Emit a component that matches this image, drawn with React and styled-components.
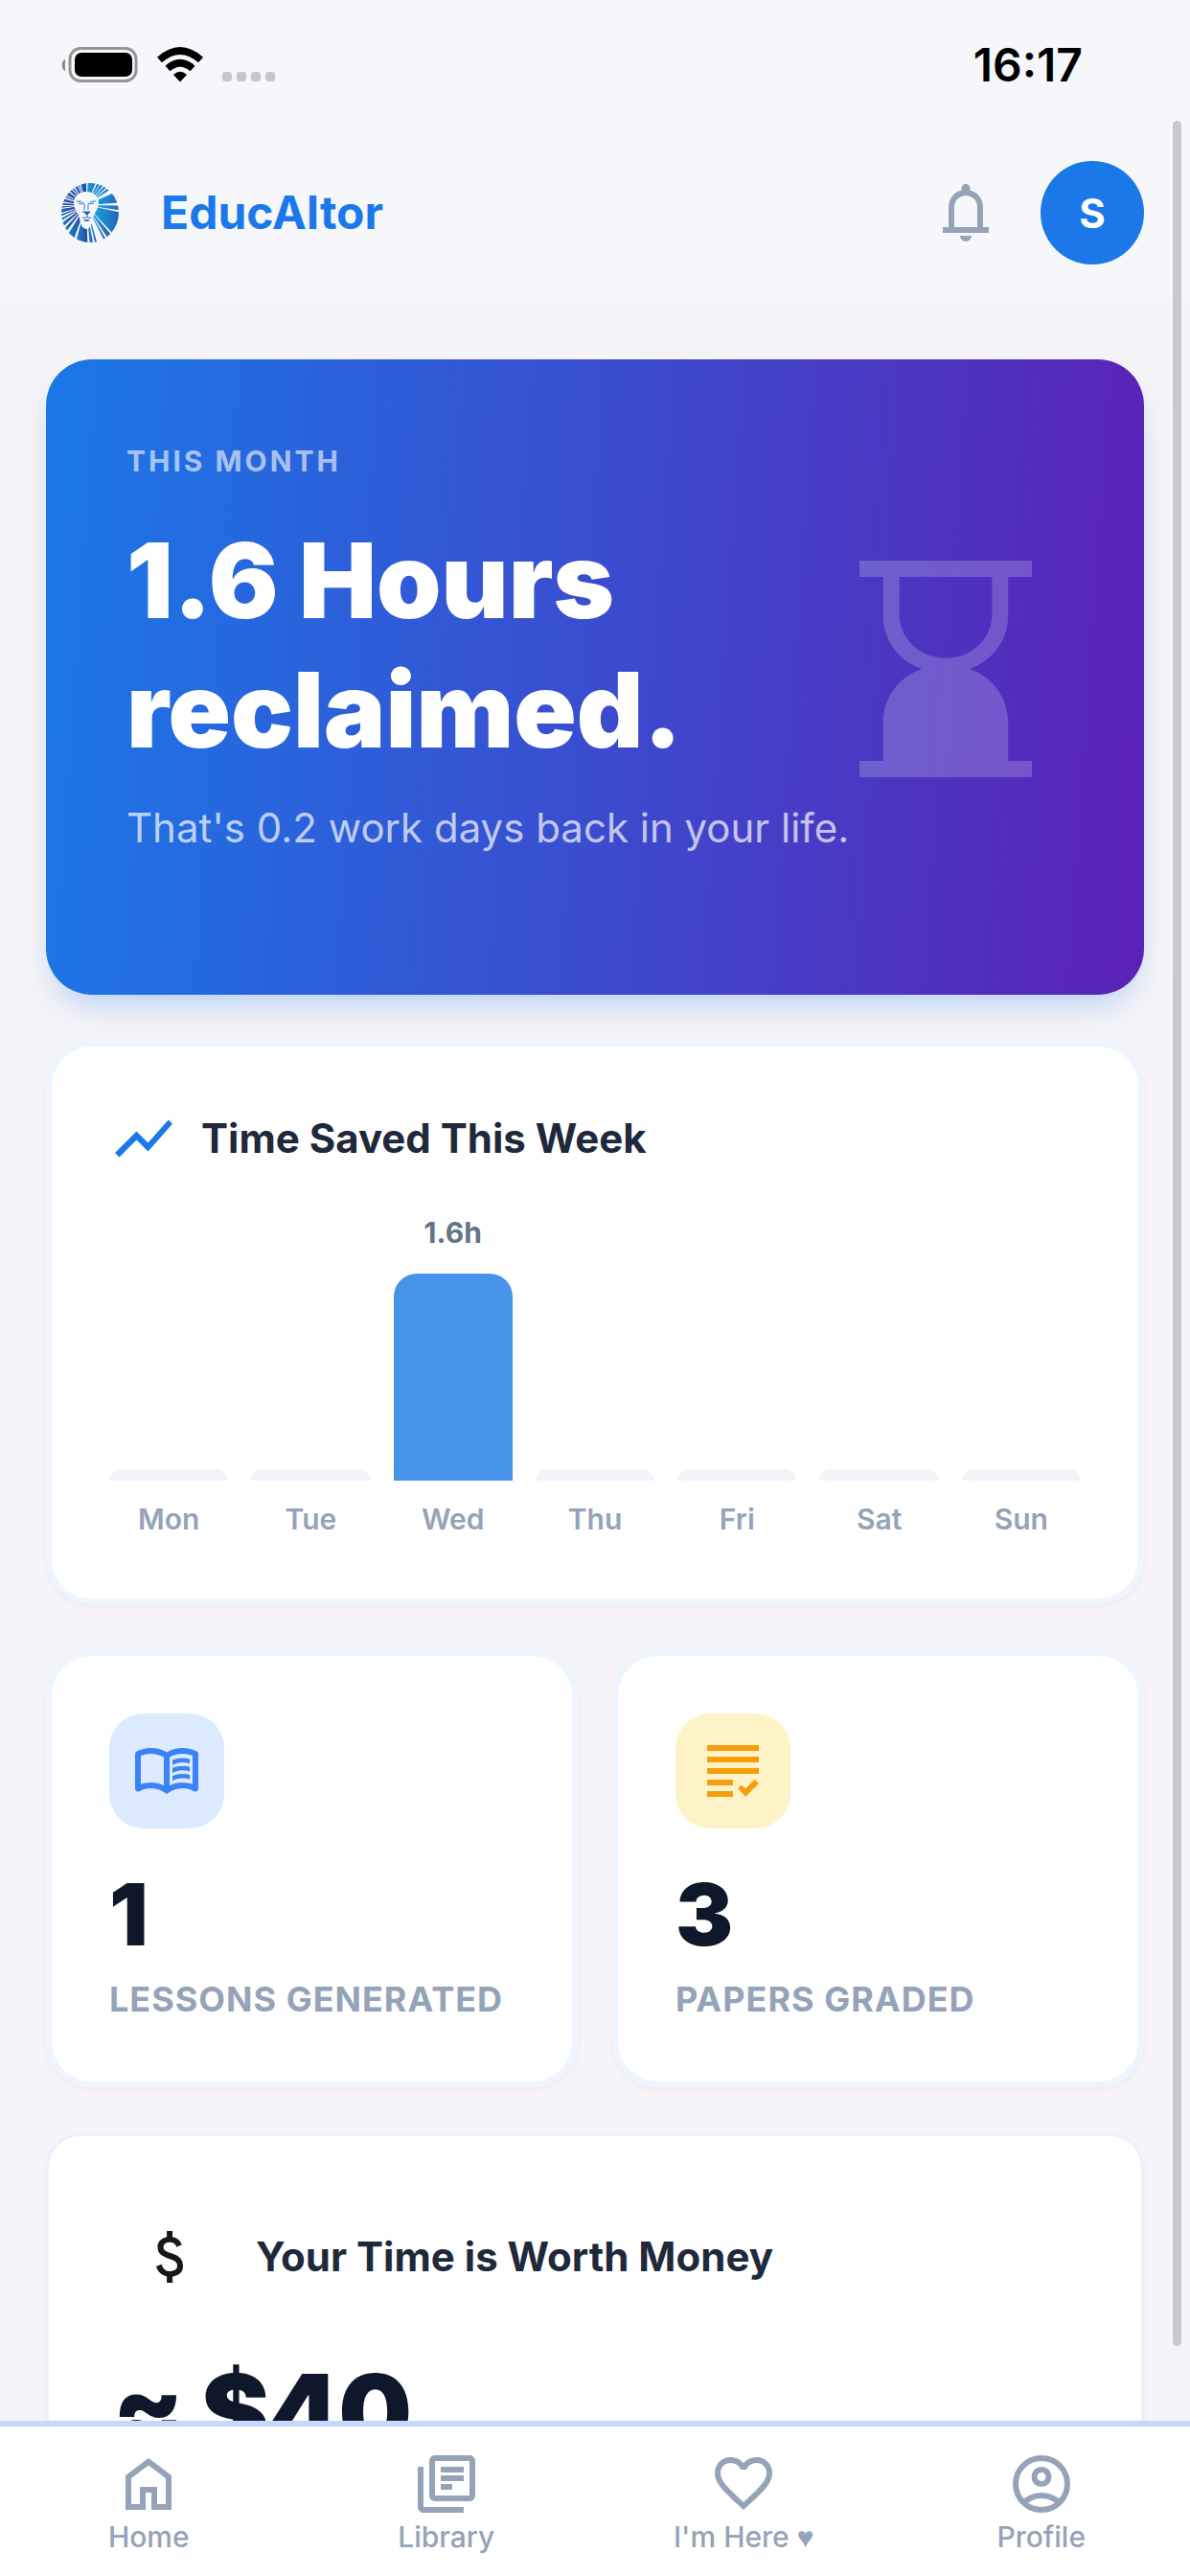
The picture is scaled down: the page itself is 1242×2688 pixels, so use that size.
import React, { Component } from 'react'
import styled, { createGlobalStyle } from 'styled-components'
import { MdShowChart, MdOutlineLibraryBooks } from 'react-icons/md'

const GlobalStyle = createGlobalStyle`
	* {
		box-sizing: border-box;
	}
	body {
		margin: 0;
		background: #f6f4f8;
		font-family: Inter, "Liberation Sans", "DejaVu Sans", sans-serif;
		-webkit-font-smoothing: antialiased;
	}
	h1, h2, p {
		margin: 0;
	}
	button {
		font-family: inherit;
		border: none;
		padding: 0;
		background: none;
	}
`

const Screen = styled.div`
	display: flex;
	flex-direction: column;
	height: 100vh;
	position: relative;
	overflow: hidden;
`

const TopArea = styled.header`
	flex: none;
	background: #f5f7fa;
`

const StatusBar = styled.div`
	display: flex;
	align-items: center;
	justify-content: space-between;
	height: 126px;
	padding: 10px 112px 0 64px;
`

const StatusIcons = styled.div`
	display: flex;
	align-items: center;
	gap: 20px;
`

const Clock = styled.time`
	font-size: 48px;
	font-weight: 600;
	line-height: 60px;
	color: #000;
`

const TitleBar = styled.div`
	display: flex;
	align-items: center;
	justify-content: space-between;
	padding: 42px 48px 36px;
`

const Brand = styled.a`
	display: flex;
	align-items: center;
	gap: 30px;
	font-size: 48px;
	font-weight: 700;
	line-height: 60px;
	color: #1a78e8;
	text-decoration: none;
`

const Actions = styled.div`
	display: flex;
	align-items: center;
	gap: 42px;
`

const BellButton = styled.button`
	display: flex;
	color: #94a3b8;
`

const Avatar = styled.button`
	width: 108px;
	height: 108px;
	border-radius: 50%;
	background: #1a78e8;
	color: #fff;
	font-size: 42px;
	font-weight: 700;
`

const Content = styled.main`
	flex: 1;
	min-height: 0;
	overflow: hidden;
	display: flex;
	flex-direction: column;
	gap: 48px;
	padding: 63px 48px 0;
	> * {
		flex: none;
	}
`

const Hero = styled.section`
	display: flex;
	align-items: center;
	padding: 84px 117px 102px 84px;
	border-radius: 48px;
	background: linear-gradient(94deg, #1a78e8, #5b21b6);
	box-shadow: 0 18px 36px -12px rgba(26, 120, 232, 0.35);
	color: #fff;
	svg {
		flex: none;
	}
`

const HeroText = styled.div`
	flex: 1;
	min-width: 0;
	padding-bottom: 41px;
`

const Period = styled.p`
	font-size: 30px;
	font-weight: 700;
	line-height: 45px;
	letter-spacing: 3px;
	text-transform: uppercase;
	color: rgba(255, 255, 255, 0.6);
`

const Headline = styled.h1`
	margin: 34px 0 24px;
	font-size: 108px;
	font-weight: 900;
	line-height: 135px;
`

const HeroNote = styled.p`
	font-size: 42px;
	line-height: 63px;
	white-space: nowrap;
	color: rgba(255, 255, 255, 0.7);
`

const Card = styled.section`
	border: 6px solid #eef5ff;
	border-radius: 48px;
	padding: 60px;
	background: #fff;
	box-shadow: 0 3px 6px rgba(0, 0, 0, 0.04);
`

const CardHead = styled.div`
	display: flex;
	align-items: center;
	gap: 24px;
	color: #1a78e8;
`

const CardTitle = styled.h2`
	font-size: 42px;
	font-weight: 700;
	line-height: 54px;
	color: #1e293b;
`

const Chart = styled.div`
	display: grid;
	grid-template-columns: repeat(7, 1fr);
	gap: 24px;
	margin-top: 36px;
`

const Day = styled.div`
	display: flex;
	flex-direction: column;
	height: 348px;
	justify-content: flex-end;
	align-items: center;
	font-size: 30px;
	line-height: 45px;
`

const DayValue = styled.span`
	margin-bottom: 20px;
	font-weight: 700;
	color: #64748b;
`

const Bar = styled.div`
	width: 100%;
	border-radius: ${props => props.$filled ? '24px 24px 0 0' : '12px 12px 0 0'};
	background: ${props => props.$filled ? '#4693ea' : '#f1f4f9'};
`

const DayName = styled.span`
	margin-top: 18px;
	font-weight: 600;
	color: #94a3b8;
`

const Stats = styled.div`
	display: grid;
	grid-template-columns: 1fr 1fr;
	gap: 36px;
`

const StatIcon = styled.div`
	display: flex;
	align-items: center;
	justify-content: center;
	width: 120px;
	height: 120px;
	border-radius: 36px;
	background: ${props => props.$bg};
	color: ${props => props.$color};
`

const StatNumber = styled.p`
	margin: 36px 0 9px;
	font-size: 90px;
	font-weight: 900;
	line-height: 108px;
	color: #0f172a;
`

const StatLabel = styled.p`
	font-size: 36px;
	font-weight: 700;
	line-height: 51px;
	letter-spacing: 1px;
	text-transform: uppercase;
	color: #94a3b8;
`

const MoneyCard = styled(Card)`
	border: 3px solid #e8f1fe;
	border-radius: 36px;
	padding: 66px;
`

const MoneyHead = styled(CardHead)`
	gap: 30px;
	color: #18181b;
`

const MoneyIcon = styled.div`
	display: flex;
	align-items: center;
	justify-content: center;
	width: 120px;
	height: 120px;
`

const Amount = styled.p`
	margin-top: 34px;
	font-size: 108px;
	font-weight: 900;
	line-height: 135px;
	letter-spacing: -2px;
	color: #0f172a;
`

const ScrollThumb = styled.div`
	position: absolute;
	top: 126px;
	right: 9px;
	bottom: 240px;
	width: 9px;
	border-radius: 5px;
	background: rgba(0, 0, 0, 0.18);
`

const TabBar = styled.nav`
	flex: none;
	display: grid;
	grid-template-columns: repeat(4, 1fr);
	height: 162px;
	padding-top: 24px;
	border-top: 6px solid #c5d9fd;
	background: #fff;
`

const Tab = styled.a`
	display: flex;
	flex-direction: column;
	align-items: center;
	font-size: 30px;
	font-weight: 500;
	line-height: 38px;
	color: #94a3b8;
	text-decoration: none;
`

const Suit = styled.span`
	font-family: "Liberation Sans", sans-serif;
`

// 24dp icons drawn on the 960 unit grid
const icons = {
	bell: "M160-200v-80h80v-280q0-83 50-147.5T420-792v-28q0-25 17.5-42.5T480-880q25 0 42.5 17.5T540-820v28q80 20 130 84.5T720-560v280h80v80H160Zm320 120q-33 0-56.5-23.5T400-160h160q0 33-23.5 56.5T480-80ZM320-280h320v-280q0-66-47-113t-113-47q-66 0-113 47t-47 113v280Z",
	book: "M560-564v-68q33-14 67.5-21t72.5-7q26 0 51 4t49 10v64q-24-9-48.5-13.5T700-600q-38 0-73 9.5T560-564Zm0 220v-68q33-14 67.5-21t72.5-7q26 0 51 4t49 10v64q-24-9-48.5-13.5T700-380q-38 0-73 9t-67 27Zm0-110v-68q33-14 67.5-21t72.5-7q26 0 51 4t49 10v64q-24-9-48.5-13.5T700-490q-38 0-73 9.5T560-454ZM260-320q47 0 91.5 10.5T440-278v-394q-41-24-87-36t-93-12q-36 0-71.5 7T120-692v396q35-12 69.5-18t70.5-6Zm260 42q44-21 88.5-31.5T700-320q36 0 70.5 6t69.5 18v-396q-33-14-68.5-21t-71.5-7q-47 0-93 12t-87 36v394Zm-40 118q-48-38-104-59t-116-21q-42 0-82.5 11T100-198q-21 11-40.5-1T40-234v-482q0-11 5.5-21T62-752q46-24 96-36t102-12q58 0 113.5 15T480-740q51-30 106.5-45T700-800q52 0 102 12t96 36q11 5 16.5 15t5.5 21v482q0 23-19.5 35t-40.5 1q-37-20-77.5-31T700-240q-60 0-116 21t-104 59Z",
	grading: "M120-840h720v80H120v-80Zm0 160h720v80H120v-80Zm0 160h720v80H120v-80Zm0 160h360v80H120v-80Zm0 160h360v80H120v-80Zm536 76-110-114 50-46 60 48 124-124 60 54-184 182Z",
	dollar: "M441-120v-86q-53-12-91.5-46T293-348l74-30q15 48 44.5 73t77.5 25q41 0 69.5-18.5T587-356q0-35-22-55.5T463-458q-86-27-118-64.5T313-614q0-65 42-101t86-41v-84h80v84q50 8 82.5 36.5T651-650l-74 32q-12-32-34-48t-60-16q-44 0-67 19.5T393-614q0 33 30 52t104 40q69 20 104.5 63.5T667-358q0 71-42 108t-104 46v84h-80Z",
	home: "M240-200h120v-240h240v240h120v-360L480-740 240-560v360Zm-80 80v-480l320-240 320 240v480H520v-240h-80v240H160Z",
	heart: "m480-120-58-52q-101-91-167-157T150-447.5Q111-500 95.5-544T80-634q0-94 63-157t157-63q52 0 99 22t81 62q34-40 81-62t99-22q94 0 157 63t63 157q0 46-15.5 90T810-447.5Q771-395 705-329T538-172l-58 52Zm0-108q96-86 158-147.5t98-107q36-45.5 50-81t14-70.5q0-60-40-100t-100-40q-47 0-87 26.5T518-680h-76q-15-41-55-67.5T300-774q-60 0-100 40t-40 100q0 35 14 70.5t50 81q36 45.5 98 107T480-228Z",
	profile: "M234-276q51-39 114-61.5T480-360q69 0 132 22.5T726-276q35-41 54.5-93T800-480q0-133-93.5-226.5T480-800q-133 0-226.5 93.5T160-480q0 59 19.5 111t54.5 93Zm246-164q-59 0-99.5-40.5T340-580q0-59 40.5-99.5T480-720q59 0 99.5 40.5T620-580q0 59-40.5 99.5T480-440Zm0 360q-83 0-156-31.5T197-197q-54-54-85.5-127T80-480q0-83 31.5-156T197-763q54-54 127-85.5T480-880q83 0 156 31.5T763-763q54 54 85.5 127T880-480q0 83-31.5 156T763-197q-54 54-127 85.5T480-80Zm0-80q53 0 100-15.5t86-44.5q-39-29-86-44.5T480-280q-53 0-100 15.5T294-220q39 29 86 44.5T480-160Zm0-360q26 0 43-17t17-43q0-26-17-43t-43-17q-26 0-43 17t-17 43q0 26 17 43t43 17Z",
}

const Icon = ({ name }) => (
	<svg width="72" height="72" viewBox="0 -960 960 960" fill="currentColor" aria-hidden="true">
		<path d={icons[name]} />
	</svg>
)

// start and end angle of every lock of the mane
const mane = [
	[-86, -67], [-63, -57], [-55, -49], [-46, -41], [-38, -33], [-24, -4], [1, 9], [12, 47], [50, 57],
	[60, 63], [74, 77], [80, 85], [88, 106], [110, 122], [127, 133], [137, 144], [148, 152],
	[156, 160], [163, 171], [174, 177], [180, 185], [188, 196], [200, 204], [207, 216], [220, 227],
	[230, 234], [238, 245], [248, 251], [255, 270],
]

const lock = ([from, to]) => {
	const point = (deg, r) => {
		const a = deg * Math.PI / 180
		return `${(33 + r * Math.cos(a)).toFixed(1)},${(30 + r * Math.sin(a)).toFixed(1)}`
	}
	return `${point(from, 11)} ${point(from, 50)} ${point(to, 50)} ${point(to, 11)}`
}

const Logo = () => (
	<svg width="90" height="90" viewBox="-9 -7 90 90" aria-hidden="true">
		<defs>
			<clipPath id="head"><ellipse cx="37" cy="38" rx="30" ry="31" /></clipPath>
			<linearGradient id="fur">
				<stop offset="0" stopColor="#18a0e2" />
				<stop offset="1" stopColor="#2a439c" />
			</linearGradient>
		</defs>
		<g clipPath="url(#head)">
			{mane.map(range => <polygon key={range[0]} points={lock(range)} fill="url(#fur)" />)}
		</g>
		<path d="M33 16C41 16 46 21 46 28C46 34 42 37 40 43C39 50 37 55 33 55C29 55 27 50 26 43C24 37 20 34 20 28C20 21 25 16 33 16Z" fill="#f5f7fa" />
		<path d="M23 26Q28 25 31 29L31 35M43 26Q38 25 35 29L35 35M25 28l4 1M41 28l-4 1" fill="none" stroke="#2477bd" strokeWidth="1" />
		<path d="M29 37h8l-3 3v3q2 1 4 0M33 43q-2 1-4 0" fill="none" stroke="#2563ae" strokeWidth="1" />
		<path d="M30 37h7l-3 3h-1ZM30 46q3-2 7 0q-3 2-7 0Z" fill="#2563ae" />
	</svg>
)

const Hourglass = () => (
	<svg width="180" height="226" viewBox="4 2 16 20" preserveAspectRatio="none" fill="#fff" fillOpacity="0.2" aria-hidden="true">
		<path fillRule="evenodd" d="M4 2h16v1.5h-2.2V7c0 2.4-1.5 4.3-3.6 5 2.1.7 3.6 2.6 3.6 5v3.5H20V22H4v-1.5h2.2V17c0-2.4 1.5-4.3 3.6-5-2.1-.7-3.6-2.6-3.6-5V3.5H4V2Zm3.7 1.5V7c0 2.2 1.9 4 4.3 4s4.3-1.8 4.3-4V3.5H7.7Z" />
	</svg>
)

class App extends Component {
	state = {
		week: [
			{ day: "Mon", hours: 0 },
			{ day: "Tue", hours: 0 },
			{ day: "Wed", hours: 1.6 },
			{ day: "Thu", hours: 0 },
			{ day: "Fri", hours: 0 },
			{ day: "Sat", hours: 0 },
			{ day: "Sun", hours: 0 },
		],
		lessons: 1,
		papers: 3,
	}

	render() {
		const { week, lessons, papers } = this.state
		const most = Math.max(...week.map(d => d.hours))
		return (
			<Screen>
				<GlobalStyle />
				<TopArea>
					<StatusBar>
						<StatusIcons>
							<svg width="80" height="38" viewBox="0 0 80 38">
								<path d="M4 12.500C-.5 15-.5 23 4 25.500Z" fill="#8a8b8c" />
								<rect x="9" y="1.500" width="69" height="34" rx="11" fill="none" stroke="#949596" strokeWidth="3" />
								<rect x="14" y="6" width="60" height="25" rx="7" fill="#000" />
							</svg>
							<svg width="48" height="38" viewBox="0 0 48 38">
								<g fill="none" stroke="#000" strokeWidth="7.500">
									<path d="M2.500 13.500Q24-5.500 45.500 13.500" />
									<path d="M11 22.500Q24 11 37 22.500" />
								</g>
								<path d="M17 29Q24 22.500 31 29L24 36.500Z" fill="#000" />
							</svg>
							<svg width="56" height="38" viewBox="0 0 56 38" fill="#c5c7c8">
								<rect x="0" y="26" width="10" height="10" rx="3" />
								<rect x="15" y="26" width="10" height="10" rx="3" />
								<rect x="30" y="26" width="10" height="10" rx="3" />
								<rect x="45" y="26" width="10" height="10" rx="3" />
							</svg>
						</StatusIcons>
						<Clock>16:17</Clock>
					</StatusBar>
					<TitleBar>
						<Brand href="#home"><Logo />EducAItor</Brand>
						<Actions>
							<BellButton aria-label="Notifications"><Icon name="bell" /></BellButton>
							<Avatar aria-label="Account">S</Avatar>
						</Actions>
					</TitleBar>
				</TopArea>

				<Content>
					<Hero>
						<HeroText>
							<Period>This month</Period>
							<Headline>1.6 Hours<br />reclaimed.</Headline>
							<HeroNote>That's 0.2 work days back in your life.</HeroNote>
						</HeroText>
						<Hourglass />
					</Hero>

					<Card>
						<CardHead>
							<MdShowChart size={72} />
							<CardTitle>Time Saved This Week</CardTitle>
						</CardHead>
						<Chart>
							{week.map(({ day, hours }) => (
								<Day key={day}>
									{hours > 0 && <DayValue>{hours}h</DayValue>}
									<Bar $filled={hours > 0} style={{ height: Math.max(12, hours / most * 216) }} />
									<DayName>{day}</DayName>
								</Day>
							))}
						</Chart>
					</Card>

					<Stats>
						<Card>
							<StatIcon $bg="#dbeafe" $color="#3b82f6"><Icon name="book" /></StatIcon>
							<StatNumber>{lessons}</StatNumber>
							<StatLabel>Lessons generated</StatLabel>
						</Card>
						<Card>
							<StatIcon $bg="#fef3c7" $color="#f59e0b"><Icon name="grading" /></StatIcon>
							<StatNumber>{papers}</StatNumber>
							<StatLabel>Papers graded</StatLabel>
						</Card>
					</Stats>

					<MoneyCard>
						<MoneyHead>
							<MoneyIcon><Icon name="dollar" /></MoneyIcon>
							<CardTitle>Your Time is Worth Money</CardTitle>
						</MoneyHead>
						<Amount>≈ $40</Amount>
					</MoneyCard>
				</Content>
				<ScrollThumb />

				<TabBar>
					<Tab href="#home"><Icon name="home" />Home</Tab>
					<Tab href="#library"><MdOutlineLibraryBooks size={72} />Library</Tab>
					<Tab href="#here"><Icon name="heart" /><span>I'm Here <Suit>♥</Suit></span></Tab>
					<Tab href="#profile"><Icon name="profile" />Profile</Tab>
				</TabBar>
			</Screen>
		)
	}
}

export default App
